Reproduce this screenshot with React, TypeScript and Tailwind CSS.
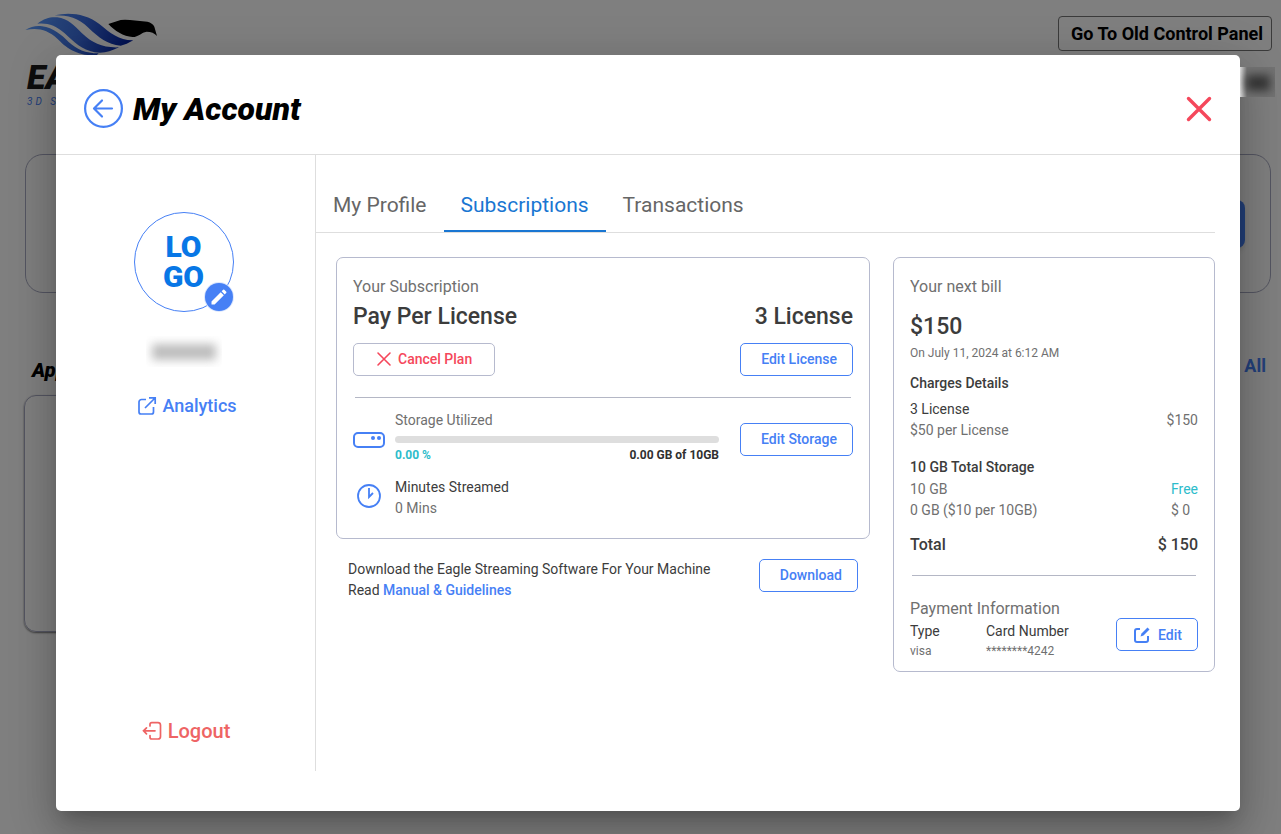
import { useState } from "react";

const tabs = ["My Profile", "Subscriptions", "Transactions"];

function OutlineButton({ children }: { children: React.ReactNode }) {
  return (
    <button className="h-[33px] shrink-0 flex items-center rounded-[5px] border border-[#4680f5] pb-[2px] pl-5 pr-[15px] text-sm font-medium text-[#4680f5] hover:bg-blue-50">
      {children}
    </button>
  );
}

function EagleLogo() {
  return (
    <svg className="block w-[134px] h-[44px]" viewBox="75 39 402 132" fill="none">
      <defs>
        <linearGradient id="wing" x1="90" y1="50" x2="390" y2="150" gradientUnits="userSpaceOnUse">
          <stop offset="0" stopColor="#5a9cff" />
          <stop offset="0.5" stopColor="#3c6ee0" />
          <stop offset="1" stopColor="#001c9c" />
        </linearGradient>
      </defs>
      <path d="M76 90C92 80 110 76 126 79C160 84 184 104 206 126C230 148 256 160 296 160L290 166C228 168 198 142 172 116C142 88 112 82 76 90Z" fill="url(#wing)" />
      <path d="M112 71C134 54 152 50 172 52C204 56 222 76 246 100C278 130 308 144 357 142C330 155 312 161 284 157C246 150 222 126 194 100C168 76 142 68 112 71Z" fill="url(#wing)" />
      <path d="M164 46C210 36 258 42 298 72C332 100 358 122 400 121C386 129 374 135 362 137C322 134 296 112 266 84C236 54 204 46 164 46Z" fill="url(#wing)" />
      <path d="M325 72L362 60Q374 58 390 60L442 65Q458 69 463 80L471 108Q460 95 440 95C424 97 416 111 398 111C370 110 344 92 325 72Z" fill="#000" />
    </svg>
  );
}

function Dashboard() {
  return (
    <div className="min-h-screen bg-white">
      <header className="flex justify-between pt-[13px] pr-[9px] pl-[25px]">
        <div>
          <EagleLogo />
          <p className="mt-[2px] pl-[2px] text-[34px] leading-[36px] font-black italic text-[#1d1d1d]">EAGLE</p>
          <p className="mt-[2px] pl-[2px] text-[10px] leading-[10px] italic tracking-[3px] text-[#4680f5]">3D STREAMING</p>
        </div>
        <button className="mt-[3px] h-[35px] rounded-[4px] border border-[#777] pl-3 pr-2 text-lg font-bold text-black">
          Go To Old Control Panel
        </button>
      </header>
      <section className="mt-[47px] ml-[25px] mr-[10px] flex h-[139px] items-center justify-end rounded-[18px] border border-[#a9abc2] pr-[25px]">
        <button className="h-12 w-40 rounded-lg bg-[#4680f5] text-white shadow-md">Upload</button>
      </section>
      <div className="mt-[59px] flex items-end justify-between pl-8 pr-[15px]">
        <h2 className="pt-1 text-[20px] leading-7 font-black italic text-black">Apps</h2>
        <a href="#" className="self-start text-lg leading-7 font-bold text-[#4680f5]">View All</a>
      </div>
      {/* stops short of the right edge, under the dialog */}
      <section className="mt-[11px] mr-14 ml-6 h-[237px] rounded-xl border border-[#a9abc2] shadow-[0_1px_2px_#777]"></section>
    </div>
  );
}

function Sidebar() {
  return (
    <aside className="flex w-[260px] shrink-0 flex-col items-center border-r border-[#dedede] pt-[57px] pr-1 pb-6">
      <div className="relative flex h-[100px] w-[100px] items-center justify-center rounded-full border border-[#4680f5]">
        <p className="text-center text-[30px] leading-[30px] font-black text-[#0877e6]">LO<br />GO</p>
        <button aria-label="Change logo" className="absolute right-0 bottom-0 flex h-7 w-7 items-center justify-center rounded-full bg-[#4680f5] ring-1 ring-[#dce7fd]">
          <svg className="h-5 w-5" viewBox="0 0 24 24" fill="#fff">
            <path d="M3 17.25V21h3.75L17.81 9.94l-3.75-3.75L3 17.25zM20.71 7.04a1 1 0 0 0 0-1.41l-2.34-2.34a1 1 0 0 0-1.41 0l-1.83 1.83 3.75 3.75 1.83-1.83z" />
          </svg>
        </button>
      </div>
      <div className="mt-6 flex h-[31px] w-[76px] items-center justify-center overflow-hidden">
        <div className="h-4 w-16 bg-[#bdbdbd] blur-[5px]"></div>
      </div>
      <a href="#" className="mt-[25px] flex items-center gap-[5px] pl-[7px] text-lg leading-7 font-medium text-[#4680f5]">
        <svg className="h-5 w-5" viewBox="0 0 20 20" fill="none" stroke="currentColor" strokeWidth="1.7">
          <path d="M9 3.5H4.5A2.5 2.5 0 0 0 2 6v10a2 2 0 0 0 2 2h10.5a2 2 0 0 0 2-2v-5M8 12 18 2M12 1.8h6.2V8" />
        </svg>
        Analytics
      </a>
      <button className="mt-auto flex items-center gap-[6px] pl-[5px] text-xl leading-8 font-medium text-[#ee6464]">
        <svg className="h-5 w-5" viewBox="0 0 20 20" fill="none" stroke="currentColor" strokeWidth="1.7" strokeLinecap="round">
          <path d="M8 5V3.5A1.8 1.8 0 0 1 9.8 1.7H16A2.5 2.5 0 0 1 18.5 4v11.5a2.5 2.5 0 0 1-2.5 2.5H9.8A1.8 1.8 0 0 1 8 16.2V14.5M13 9.8H1.5M4.5 6.8l-3 3 3 3" />
        </svg>
        Logout
      </button>
    </aside>
  );
}

function SubscriptionCard() {
  return (
    <section className="rounded-[7px] border border-[#b6bace] px-4 pt-[17px] pb-[19px] text-sm leading-[21px]">
      <p className="text-base leading-6 text-[#707070]">Your Subscription</p>
      <div className="mt-[2px] flex justify-between text-[23px] leading-8 font-medium text-[#3c3c3c]">
        <h2>Pay Per License</h2>
        <p>3 License</p>
      </div>
      <div className="mt-[10px] flex items-center justify-between">
        <button className="flex h-[33px] items-center gap-[6px] rounded-[5px] border border-[#b6bace] px-[22px] pb-[2px] text-sm font-medium text-[#f5475b] hover:bg-red-50">
          <svg className="h-4 w-4" viewBox="0 0 16 16" fill="none" stroke="currentColor" strokeWidth="1.6" strokeLinecap="round">
            <path d="m2 2 12 12M14 2 2 14" />
          </svg>
          Cancel Plan
        </button>
        <OutlineButton>Edit License</OutlineButton>
      </div>
      <hr className="mx-[2px] mt-[21px] border-[#b4b7c5]" />
      <div className="mt-3 flex items-center">
        <svg className="w-8 h-4 mr-[10px] shrink-0" viewBox="0 0 32 16" fill="none">
          <rect x="1" y="1" width="30" height="14" rx="4" stroke="#4680f5" strokeWidth="2" />
          <circle cx="20" cy="6" r="2" fill="#4680f5" />
          <circle cx="26" cy="6" r="2" fill="#4680f5" />
        </svg>
        <div className="mr-[21px] flex-1 pb-[2px]">
          <p className="text-[#707070]">Storage Utilized</p>
          <div role="progressbar" aria-label="Storage Utilized" aria-valuenow={0} className="mt-[5px] h-[7px] rounded-full bg-[#dedede]"></div>
          <div className="flex justify-between text-xs leading-6 font-bold">
            <span className="text-[#2dbccb]">0.00 %</span>
            <span className="text-[#303030]">0.00 GB of 10GB</span>
          </div>
        </div>
        <OutlineButton>Edit Storage</OutlineButton>
      </div>
      <div className="mt-2 flex items-start">
        <svg className="mt-[7px] mr-[14px] ml-1 h-6 w-6 shrink-0" viewBox="0 0 24 24" fill="none" stroke="#4680f5">
          <circle cx="12" cy="12" r="11" strokeWidth="1.8" />
          <path d="M12 4v9l4-4" strokeWidth="1.8" />
        </svg>
        <div>
          <p className="text-[#3c3c3c]">Minutes Streamed</p>
          <p className="text-[#707070]">0 Mins</p>
        </div>
      </div>
    </section>
  );
}

function BillCard() {
  return (
    <section className="w-[322px] shrink-0 rounded-[7px] border border-[#b6bace] px-4 pt-[17px] pb-[11px] text-sm leading-[21px] text-[#707070]">
      <p className="text-base leading-6">Your next bill</p>
      <p className="mt-3 text-[23px] leading-8 font-medium text-[#3c3c3c]">$150</p>
      <p className="text-xs leading-5">On July 11, 2024 at 6:12 AM</p>
      <h3 className="mt-[10px] font-medium text-[#3c3c3c]">Charges Details</h3>
      <div className="mt-[5px] flex items-center justify-between">
        <div>
          <p className="text-[#3c3c3c]">3 License</p>
          <p>$50 per License</p>
        </div>
        <p>$150</p>
      </div>
      <h3 className="mt-4 font-medium text-[#3c3c3c]">10 GB Total Storage</h3>
      <div className="mt-px flex justify-between">
        <div>
          <p>10 GB</p>
          <p>0 GB ($10 per 10GB)</p>
        </div>
        <div>
          <p className="text-[#2dbccb]">Free</p>
          <p>$ 0</p>
        </div>
      </div>
      <div className="mt-3 flex justify-between text-base leading-6 font-medium text-[#3c3c3c]">
        <p>Total</p>
        <p>$ 150</p>
      </div>
      <hr className="mx-[2px] mt-[18px] border-[#b4b7c5]" />
      <div className="mt-[21px] flex items-center justify-between">
        <div>
          <p className="text-base leading-6">Payment Information</p>
          <table className="text-left">
            <thead className="text-[#3c3c3c]">
              <tr>
                <th className="w-[76px] p-0 font-normal">Type</th>
                <th className="p-0 font-normal">Card Number</th>
              </tr>
            </thead>
            <tbody className="text-xs leading-[18px]">
              <tr>
                <td className="p-0">visa</td>
                <td className="p-0">********4242</td>
              </tr>
            </tbody>
          </table>
        </div>
        <button className="mt-3 flex h-[33px] items-center gap-2 rounded-[5px] border border-[#4680f5] pl-[17px] pr-[15px] text-sm font-medium text-[#4680f5]">
          <svg className="h-4 w-4" viewBox="0 0 16 16" fill="none" stroke="currentColor" strokeWidth="2">
            <path d="M6 2H3a2 2 0 0 0-2 2v9a2 2 0 0 0 2 2h9a2 2 0 0 0 2-2V9" />
            <path d="m6.5 9.5 1-3 6-6 2 2-6 6z" fill="currentColor" stroke="none" />
          </svg>
          Edit
        </button>
      </div>
    </section>
  );
}

export default function App() {
  const [activeTab, setActiveTab] = useState("Subscriptions");

  return (
    <div className="relative min-h-screen font-['Roboto','Noto_Sans',sans-serif]">
      <Dashboard />

      {/* backdrop + dialog */}
      <div className="absolute inset-0 flex bg-black/50 pt-[55px] pr-[41px] pb-[23px] pl-14">
        <div role="dialog" aria-label="My Account" className="flex flex-1 flex-col rounded-[5px] bg-white pb-10 shadow-[0_11px_15px_-7px_rgba(0,0,0,0.2),0_24px_38px_3px_rgba(0,0,0,0.14),0_9px_46px_8px_rgba(0,0,0,0.12)]">
          <header className="flex h-[100px] items-center justify-between border-b border-[#dedede] pt-2 pr-7 pl-7">
            <div className="flex items-center gap-[10px]">
              <button aria-label="Back">
                <svg className="block h-[39px] w-[39px]" viewBox="0 0 39 39" fill="none" stroke="#4680f5" strokeWidth="2.2">
                  <circle cx="19.5" cy="19.5" r="18.4" />
                  <path d="M28 19.5H11M18 11.5l-8 8 8 8" strokeLinecap="round" strokeLinejoin="round" />
                </svg>
              </button>
              <h1 className="text-[32px] leading-10 font-black italic text-black">My Account</h1>
            </div>
            <button aria-label="Close">
              <svg className="block h-[26px] w-[26px]" viewBox="0 0 26 26" fill="none" stroke="#f5475b" strokeWidth="3.4" strokeLinecap="round">
                <path d="m2.5 2.5 21 21M23.5 2.5l-21 21" />
              </svg>
            </button>
          </header>

          <div className="flex flex-1">
            <Sidebar />
            <main className="flex-1 pr-[25px]">
              <div role="tablist" className="flex border-b border-[#dedede] pt-6">
                {tabs.map((tab) => (
                  <button
                    key={tab}
                    role="tab"
                    aria-selected={tab === activeTab}
                    onClick={() => setActiveTab(tab)}
                    className={`h-[53px] border-b-2 px-[17px] pt-[2px] text-[21px] ${
                      tab === activeTab ? "border-[#1976d2] text-[#1976d2]" : "border-transparent text-[#666]"
                    }`}
                  >
                    {tab}
                  </button>
                ))}
              </div>

              <div className="mt-6 flex items-start gap-[23px] pl-5">
                <div className="flex-1">
                  <SubscriptionCard />
                  <div className="mt-5 flex items-start justify-between pr-3 pl-3">
                    <p className="text-sm leading-[21px] text-[#3c3c3c]">
                      Download the Eagle Streaming Software For Your Machine
                      <br />
                      Read <a href="#" className="font-medium text-[#4680f5]">Manual &amp; Guidelines</a>
                    </p>
                    <OutlineButton>Download</OutlineButton>
                  </div>
                </div>
                <BillCard />
              </div>
            </main>
          </div>
        </div>

        {/* blurred user name */}
        <div className="absolute top-[67px] right-[6px] h-[30px] w-[35px] overflow-hidden bg-gradient-to-r from-[#ddd] to-[#727272] to-20%">
          <div className="mt-2 ml-[6px] h-4 w-6 bg-[#333] blur-[5px]"></div>
        </div>
      </div>
    </div>
  );
}
